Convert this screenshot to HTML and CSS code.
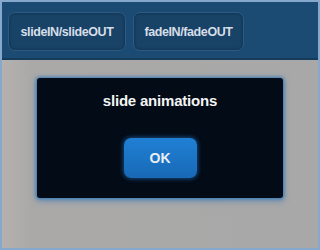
FILE: index.html
```html
<!DOCTYPE html>
<html>
<head>
<meta charset="utf-8">
<link rel="stylesheet" href="styles.css">
</head>
<body>
<div class="frame">
  <div class="topbar">
    <button class="tab tab-slide">slideIN/slideOUT</button>
    <button class="tab tab-fade">fadeIN/fadeOUT</button>
  </div>
  <div class="stage">
    <div class="dialog">
      <div class="title">slide animations</div>
      <button class="ok">OK</button>
    </div>
  </div>
</div>
</body>
</html>
```
FILE: styles.css
```css
html, body {
  margin: 0;
  padding: 0;
  width: 320px;
  height: 250px;
  overflow: hidden;
  background: #8fb0d2;
  font-family: "Liberation Sans", Arial, sans-serif;
}
.frame {
  box-sizing: border-box;
  width: 320px;
  height: 250px;
  border: 2px solid #86a8cc;
  display: flex;
  flex-direction: column;
}
.topbar {
  height: 58px;
  background: #1b4a72;
  border-bottom: 2px solid #163c5c;
  display: flex;
  align-items: flex-start;
  padding: 10px 0 0 6px;
  gap: 7px;
  box-sizing: border-box;
}
.tab {
  height: 39px;
  border-radius: 7px;
  background: #184266;
  border: 1px solid #2b5a84;
  box-shadow: inset 0 0 3px rgba(0,0,0,0.35);
  color: #d6dee8;
  font-family: "Liberation Sans", Arial, sans-serif;
  font-weight: bold;
  font-size: 12.5px;
  letter-spacing: -0.4px;
  padding: 0;
}
.tab-slide { width: 118px; }
.tab-fade { width: 111px; }
.stage {
  flex: 1;
  background: #a9a9a9;
  background-image: linear-gradient(to right, #b4b1ae 0, #aaa9a8 30px, #a8a8a8 100%);
  padding: 18px 0 0 35px;
  box-sizing: border-box;
}
.dialog {
  width: 246px;
  height: 120px;
  background: #020b16;
  border-radius: 3px;
  box-shadow: 0 0 3px 1px #3f7fb8, 0 2px 6px 1px rgba(60,120,180,0.6);
  display: flex;
  flex-direction: column;
  align-items: center;
  box-sizing: border-box;
  padding-top: 14px;
}
.title {
  color: #f4f4f4;
  font-weight: bold;
  font-size: 15px;
  letter-spacing: -0.2px;
}
.ok {
  margin-top: 29px;
  width: 73px;
  height: 40px;
  border-radius: 7px;
  border: none;
  background: linear-gradient(#2080d4, #1869b6);
  box-shadow: 0 0 4px 1px rgba(40,120,210,0.55);
  color: #e8eef6;
  font-family: "Liberation Sans", Arial, sans-serif;
  font-weight: bold;
  font-size: 14px;
  padding: 0;
}
```
